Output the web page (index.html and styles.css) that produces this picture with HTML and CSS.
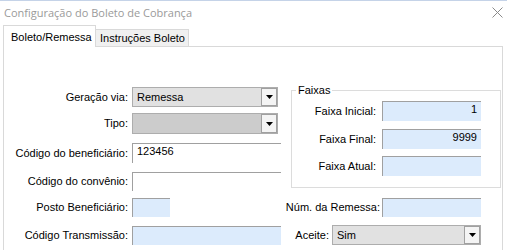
FILE: index.html
```html
<!DOCTYPE html>
<html lang="pt-BR">
<head>
<meta charset="utf-8">
<title>Configuração do Boleto de Cobrança</title>
<link rel="stylesheet" href="styles.css">
</head>
<body>
<div class="window">
  <div class="titlebar">
    <span class="title">Configuração do Boleto de Cobrança</span>
    <svg class="close" width="11" height="11" viewBox="0 0 11 11"><path d="M0.5 0.5 L10.5 10.5 M10.5 0.5 L0.5 10.5" stroke="#8a8a8a" stroke-width="1" fill="none"/></svg>
  </div>
  <div class="tabs">
    <div class="tab tab-active">Boleto/Remessa</div>
    <div class="tab tab-inactive">Instruções Boleto</div>
    <div class="tab-fill"></div>
  </div>
  <div class="panel">
    <div class="col-left">
      <div class="row">
        <span class="lbl">Geração via:</span>
        <div class="combo combo-left h20"><span class="combo-text">Remessa</span><span class="combo-btn"><svg width="7" height="4" viewBox="0 0 7 4"><polygon points="0,0 7,0 3.5,4" fill="#000"/></svg></span></div>
      </div>
      <div class="row mt6">
        <span class="lbl">Tipo:</span>
        <div class="combo combo-left combo-disabled h21"><span class="combo-text"></span><span class="combo-btn"><svg width="7" height="4" viewBox="0 0 7 4"><polygon points="0,0 7,0 3.5,4" fill="#000"/></svg></span></div>
      </div>
      <div class="row mt9">
        <span class="lbl">Código do beneficiário:</span>
        <div class="field field-wide field-white h20">123456</div>
      </div>
      <div class="row mt9">
        <span class="lbl">Código do convênio:</span>
        <div class="field field-wide field-white h19"></div>
      </div>
      <div class="row mt7">
        <span class="lbl">Posto Beneficiário:</span>
        <div class="field field-short h19"></div>
      </div>
      <div class="row mt9">
        <span class="lbl">Código Transmissão:</span>
        <div class="field field-wide h19"></div>
      </div>
    </div>
    <div class="col-right">
      <fieldset class="group">
        <legend class="group-title">Faixas</legend>
        <div class="grow">
          <span class="glbl">Faixa Inicial:</span>
          <div class="field field-num h20">1</div>
        </div>
        <div class="grow mt8">
          <span class="glbl">Faixa Final:</span>
          <div class="field field-num h20">9999</div>
        </div>
        <div class="grow mt7">
          <span class="glbl">Faixa Atual:</span>
          <div class="field field-num h20"></div>
        </div>
      </fieldset>
      <div class="rrow mt10">
        <span class="rlbl-num">Núm. da Remessa:</span>
        <div class="field field-num h19"></div>
      </div>
      <div class="rrow mt8">
        <span class="rlbl-aceite">Aceite:</span>
        <div class="combo combo-aceite h20"><span class="combo-text">Sim</span><span class="combo-btn"><svg width="7" height="4" viewBox="0 0 7 4"><polygon points="0,0 7,0 3.5,4" fill="#000"/></svg></span></div>
      </div>
    </div>
  </div>
</div>
</body>
</html>
```
FILE: styles.css
```css
* { box-sizing: border-box; }
html, body { margin: 0; padding: 0; background: #fff; }
body {
  width: 507px;
  height: 250px;
  overflow: hidden;
  font-family: "Liberation Sans", Arial, sans-serif;
  font-size: 11px;
  color: #000;
}
.window { width: 507px; height: 250px; display: flex; flex-direction: column; }

.titlebar {
  height: 25px;
  border-top: 1px solid #c5d3e8;
  display: flex;
  align-items: center;
  justify-content: space-between;
  padding: 0 4px 2px 4px;
}
.title {
  font-family: "Open Sans", "Noto Sans", sans-serif;
  font-size: 11px;
  color: #9a9a9a;
  line-height: 15px;
}
.close { display: block; margin-right: 0; }

.tabs {
  display: flex;
  align-items: flex-end;
  height: 22px;
  margin: 0 4px 0 3px;
}
.tab { line-height: 13px; white-space: nowrap; }
.tab-active {
  height: 22px;
  width: 93px;
  border: 1px solid #d9d9d9;
  border-bottom: none;
  background: #fff;
  padding: 5px 0 0 7px;
}
.tab-inactive {
  height: 18px;
  width: 93px;
  border-top: 1px solid #d9d9d9;
  border-right: 1px solid #d9d9d9;
  border-bottom: 1px solid #d9d9d9;
  background: #f0f0f0;
  padding: 2px 0 0 4px;
}
.tab-fill { flex: 1; border-bottom: 1px solid #d9d9d9; }

.panel {
  flex: 1;
  margin: 0 4px 0 3px;
  border-left: 1px solid #d9d9d9;
  border-right: 1px solid #d9d9d9;
  display: grid;
  grid-template-columns: 287px 210px;
  align-items: start;
}

.col-left { padding-top: 40px; display: flex; flex-direction: column; }
.row { display: flex; align-items: center; }
.lbl {
  width: 124px;
  margin-right: 4px;
  text-align: right;
  white-space: nowrap;
  line-height: 13px;
  flex-shrink: 0;
}

.mt6 { margin-top: 6px; }
.mt7 { margin-top: 7px; }
.mt8 { margin-top: 8px; }
.mt9 { margin-top: 9px; }
.mt10 { margin-top: 10px; }
.h19 { height: 19px; }
.h20 { height: 20px; }
.h21 { height: 21px; }

.field {
  flex-shrink: 0;
  border-top: 1px solid #a0a0a0;
  border-left: 1px solid #a0a0a0;
  background: #dcebfc;
  line-height: 13px;
  padding: 1px 3px 0 4px;
  white-space: nowrap;
}
.field-white { background: #fff; }
.field-wide { width: 149px; }
.field-short { width: 38px; }
.field-num { width: 99px; text-align: right; padding-right: 4px; }

.combo {
  flex-shrink: 0;
  display: flex;
  align-items: stretch;
  border: 1px solid #adadad;
  background: #e1e1e1;
}
.combo-left { width: 146px; }
.combo-aceite { width: 149px; }
.combo-disabled { background: #cccccc; }
.combo-text {
  flex: 1;
  padding-left: 4px;
  line-height: 13px;
  display: flex;
  align-items: center;
}
.combo-btn {
  width: 16px;
  border: 1px solid #a0a0a0;
  background: #f4f4f4;
  margin: 0;
  display: flex;
  align-items: center;
  justify-content: center;
}
.combo-btn svg { display: block; }

.col-right { padding-top: 37px; display: flex; flex-direction: column; min-width: 0; }
.group {
  margin: 0;
  width: 210px;
  min-inline-size: 0;
  border: 1px solid #dcdcdc;
  padding: 4px 19px 11px 0;
}
.group-title {
  margin-left: 4px;
  padding: 0 2px;
  line-height: 13px;
}
.grow { display: flex; justify-content: flex-end; align-items: center; }
.glbl { margin-right: 6px; white-space: nowrap; line-height: 13px; flex-shrink: 0; }

.rrow { display: flex; justify-content: flex-end; align-items: center; padding-right: 20px; margin-left: -4px; }
.rlbl-num { margin-right: 2px; white-space: nowrap; line-height: 13px; flex-shrink: 0; }
.rlbl-aceite { margin-right: 3px; white-space: nowrap; line-height: 13px; flex-shrink: 0; }
```
